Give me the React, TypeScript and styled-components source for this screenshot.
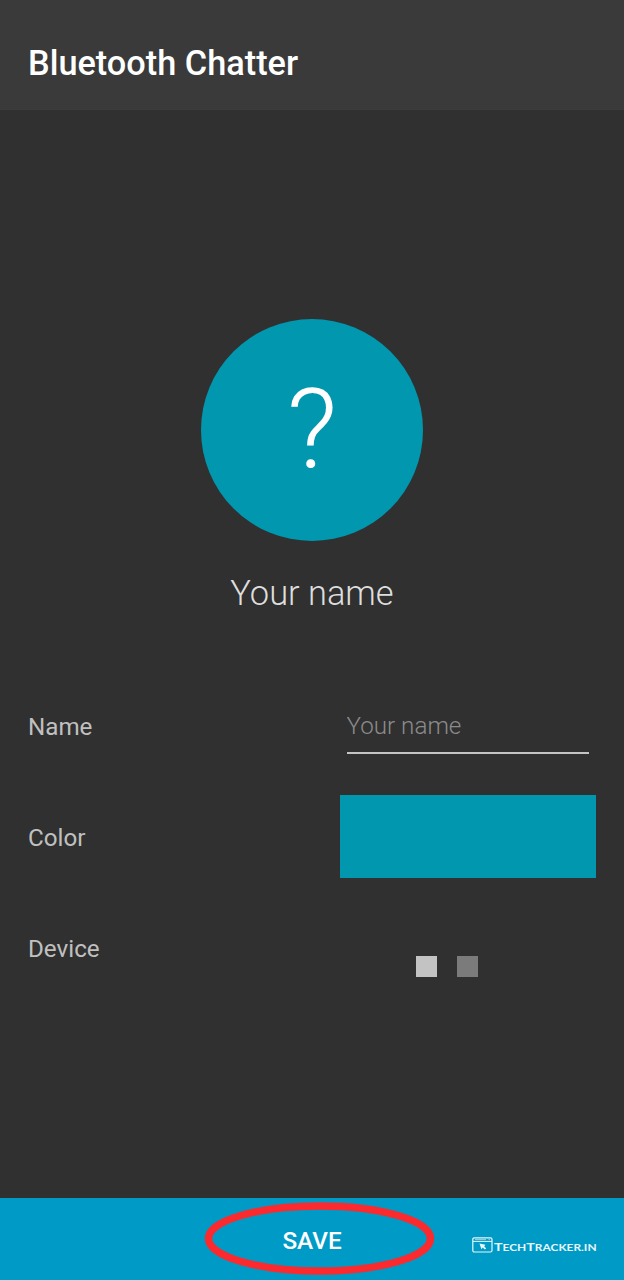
import React from "react";
import styled, { createGlobalStyle } from "styled-components";

const GlobalStyle = createGlobalStyle`
  * { box-sizing: border-box; }
  body { margin: 0; background: #303030; font-family: Roboto, sans-serif; }
`;

const Screen = styled.div`
  width: 624px;
  height: 1280px;
  display: flex;
  flex-direction: column;
  background: #303030;
  overflow: hidden;
`;

const AppBar = styled.header`
  height: 110px;
  padding: 17px 28px 0;
  display: flex;
  align-items: center;
  background: #3a3a3a;
  border-bottom: 1px solid #3c3c3c;
`;

const Title = styled.h1`
  margin: 0;
  font-size: 34.3px;
  font-weight: 500;
  line-height: 40px;
  color: #fff;
  white-space: nowrap;
`;

const Profile = styled.section`
  height: 575px;
  padding-top: 208.5px;
  display: flex;
  flex-direction: column;
  align-items: center;
`;

const Avatar = styled.div`
  width: 222px;
  height: 222px;
  border-radius: 50%;
  display: flex;
  justify-content: center;
  background: #0097af;
  color: #fff;
  font-size: 111px;
  font-weight: 300;
  line-height: 223px;
`;

const DisplayName = styled.div`
  margin-top: 31.5px;
  font-size: 34.4px;
  font-weight: 300;
  line-height: 42px;
  color: #dedede;
`;

const Form = styled.main`
  flex: 1;
  padding: 0 28px;
`;

const Row = styled.div`
  height: 111px;
  display: grid;
  grid-template-columns: 311.5px 256.5px;
`;

const Label = styled.label`
  font-size: 24.2px;
  line-height: 28px;
  padding-top: 28px;
  color: #c0c0c0;
`;

const NameInput = styled.input`
  width: 242.5px;
  height: 42px;
  margin: 26.5px 7px 0;
  padding: 0 0 12px;
  border: 0;
  border-bottom: 2px solid #c4c4c4;
  outline: 0;
  background: transparent;
  font: 300 24.2px/28px Roboto, sans-serif;
  color: #fff;
  &::placeholder { color: #8b8b8b; opacity: 1; }
`;

const Swatch = styled.button`
  height: 83px;
  margin-top: -1px;
  padding: 0;
  border: 0;
  background: #0097af;
`;

const Squares = styled.div`
  display: flex;
  gap: 20.5px;
  padding: 49px 0 0 76px;
`;

const Square = styled.span<{ $tone: string }>`
  width: 21px;
  height: 21px;
  background: ${(p) => p.$tone};
`;

const Footer = styled.footer`
  position: relative;
  height: 82px;
  display: flex;
  background: #009ac7;
`;

const SaveButton = styled.button`
  flex: 1;
  padding: 3px 0 0;
  border: 0;
  background: transparent;
  color: #fff;
  font: 500 24.3px/28px Roboto, sans-serif;
`;

const Highlight = styled.svg`
  position: absolute;
  left: 200px;
  top: 0;
  pointer-events: none;
`;

const Watermark = styled.div`
  position: absolute;
  left: 472px;
  top: 39px;
  height: 16px;
  display: flex;
  align-items: center;
  color: #e8f7fb;
`;

const WatermarkText = styled.span`
  margin: 3px 0 0 1px;
  font: 700 10px/16px Lato, sans-serif;
  text-transform: uppercase;
  white-space: nowrap;
  transform: scaleX(1.19);
  transform-origin: left center;
`;

const WatermarkCap = styled.span`
  font-size: 12px;
`;

const BrowserIcon = () => (
  <svg width="21" height="16" viewBox="0 0 21 16" fill="none" stroke="currentColor">
    <rect x="0.8" y="0.8" width="19.2" height="14.2" rx="1.5" strokeWidth="1.2" />
    <path d="M1 4.4H20" strokeWidth="1" />
    <path d="M3 2.6H14M16.5 2.6H18" strokeWidth="0.9" opacity="0.7" />
    <path d="M7.5 6.6L13.4 7.8L12.2 9.2L14.2 11.4L12.8 12.6L10.8 10.6L9.4 12.2Z" fill="currentColor" stroke="none" />
  </svg>
);

export default function App() {
  return (
    <>
      <GlobalStyle />
      <Screen>
        <AppBar>
          <Title>Bluetooth Chatter</Title>
        </AppBar>
        <Profile>
          <Avatar>?</Avatar>
          <DisplayName>Your name</DisplayName>
        </Profile>
        <Form>
          <Row>
            <Label htmlFor="name">Name</Label>
            <NameInput id="name" placeholder="Your name" />
          </Row>
          <Row>
            <Label>Color</Label>
            <Swatch aria-label="Color" />
          </Row>
          <Row>
            <Label>Device</Label>
            <Squares>
              <Square $tone="#c3c3c3" />
              <Square $tone="#7b7b7b" />
            </Squares>
          </Row>
        </Form>
        <Footer>
          <SaveButton>SAVE</SaveButton>
          <Highlight width="240" height="82" viewBox="0 0 240 82">
            <ellipse cx="119.5" cy="40.5" rx="111" ry="32.5" fill="none" stroke="#fb2a2e" strokeWidth="7.5" />
          </Highlight>
          <Watermark>
            <BrowserIcon />
            <WatermarkText>
              <WatermarkCap>T</WatermarkCap>ech<WatermarkCap>T</WatermarkCap>racker.in
            </WatermarkText>
          </Watermark>
        </Footer>
      </Screen>
    </>
  );
}
